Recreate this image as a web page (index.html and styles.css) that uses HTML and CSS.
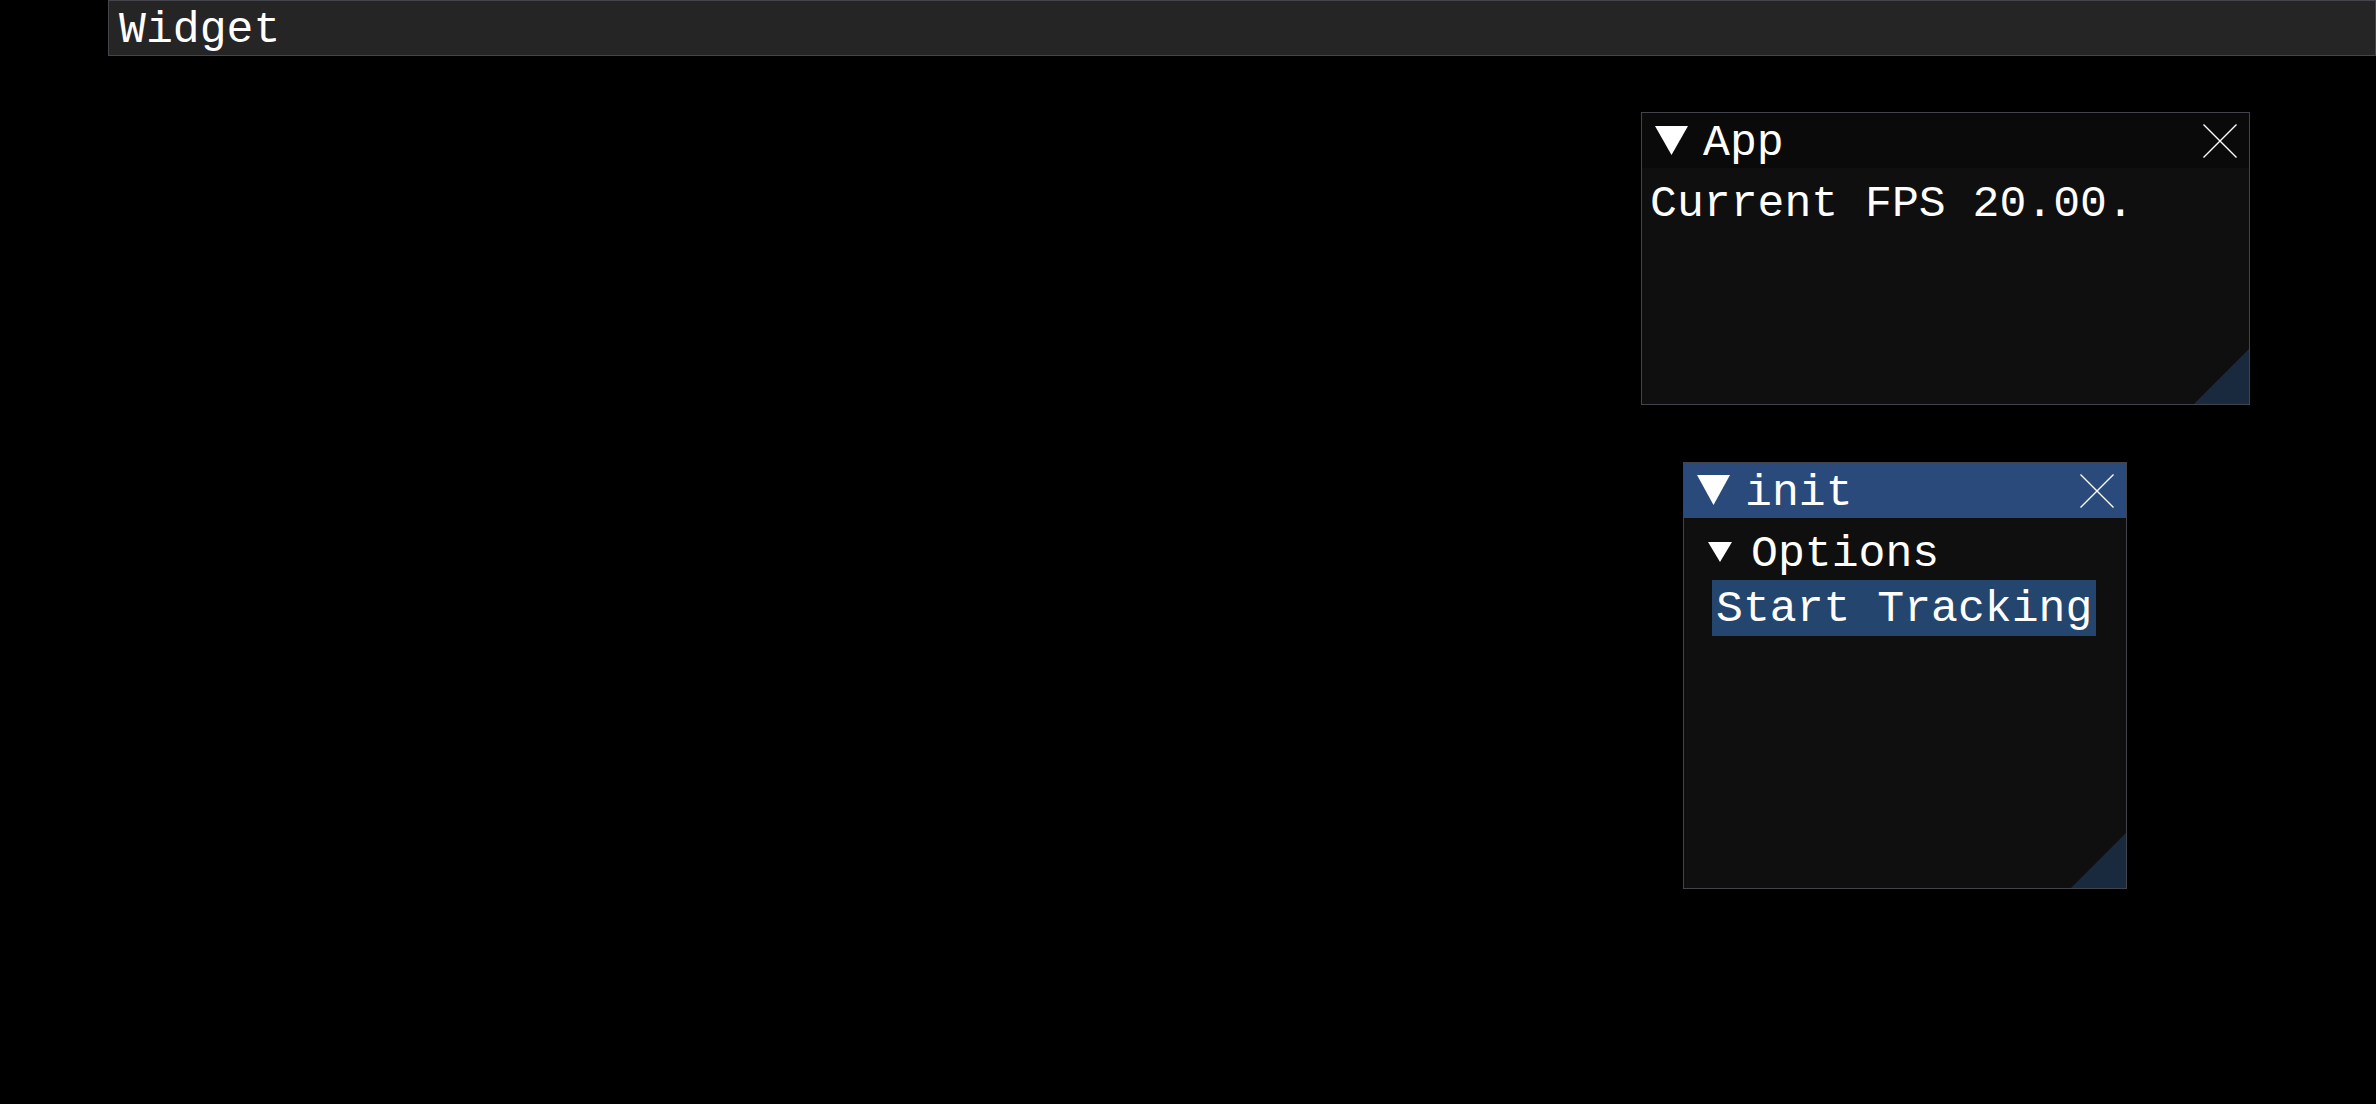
FILE: index.html
```html
<!DOCTYPE html>
<html>
<head>
<meta charset="utf-8">
<title>Widget</title>
<link rel="stylesheet" href="styles.css">
</head>
<body>
<div class="menubar">Widget</div>

<div class="win win-app">
  <div class="title title-inactive">
    <svg class="tri" width="33" height="29" viewBox="0 0 33 29"><polygon points="0,0 33,0 16.5,29" fill="#fff"/></svg>
    <span class="title-text">App</span>
    <svg class="close" width="34" height="34" viewBox="0 0 34 34"><path d="M0.5 0.5 L33.5 33.5 M33.5 0.5 L0.5 33.5" stroke="#fff" stroke-width="1.4" fill="none"/></svg>
  </div>
  <div class="body body-app">
    <div class="line">Current FPS 20.00.</div>
  </div>
  <svg class="grip" width="55" height="55" viewBox="0 0 55 55"><polygon points="55,0 55,55 0,55" fill="#1a2a3e"/></svg>
</div>

<div class="win win-init">
  <div class="title title-active">
    <svg class="tri" width="33" height="30" viewBox="0 0 33 30"><polygon points="0,0 33,0 16.5,30" fill="#fff"/></svg>
    <span class="title-text">init</span>
    <svg class="close" width="34" height="34" viewBox="0 0 34 34"><path d="M0.5 0.5 L33.5 33.5 M33.5 0.5 L0.5 33.5" stroke="#fff" stroke-width="1.4" fill="none"/></svg>
  </div>
  <div class="body body-init">
    <div class="tree">
      <svg class="tri-small" width="24" height="20" viewBox="0 0 24 20"><polygon points="0,0 24,0 12,20" fill="#fff"/></svg>
      <span>Options</span>
    </div>
    <div class="btn-row"><span class="btn">Start Tracking</span></div>
  </div>
  <svg class="grip" width="55" height="55" viewBox="0 0 55 55"><polygon points="55,0 55,55 0,55" fill="#1a2a3e"/></svg>
</div>
</body>
</html>
```
FILE: styles.css
```css
html, body {
  margin: 0;
  padding: 0;
  background: #000;
  width: 2376px;
  height: 1104px;
  overflow: hidden;
  font-family: "Liberation Mono", "DejaVu Sans Mono", monospace;
  font-size: 44.8px;
  color: #fff;
}

.menubar {
  margin-left: 108px;
  height: 56px;
  box-sizing: border-box;
  border: 1px solid #45454d;
  background: #252525;
  padding: 5px 0 0 10px;
  line-height: 49px;
  white-space: pre;
}

.win {
  position: absolute;
  box-sizing: border-box;
  border: 1px solid #43434c;
  background: #0f0f0f;
  display: flex;
  flex-direction: column;
}

.win-app {
  left: 1641px;
  top: 112px;
  width: 609px;
  height: 293px;
}

.win-init {
  left: 1683px;
  top: 462px;
  width: 444px;
  height: 427px;
}

.title {
  height: 55px;
  display: flex;
  align-items: center;
  padding: 0 12px 0 13px;
  flex: none;
}

.title-inactive { background: #0a0a0a; }
.title-active { background: #294a7a; }

.tri { flex: none; margin-top: -1px; }

.title-text {
  margin-left: 15px;
  flex: 1;
  line-height: 55px;
  padding-top: 5px;
  white-space: pre;
}

.close { flex: none; }

.body { flex: 1; }

.body-app {
  padding: 11px 0 0 8px;
}

.line {
  line-height: 50px;
  white-space: pre;
}

.body-init {
  padding: 6px 0 0 0;
}

.tree {
  height: 56px;
  display: flex;
  align-items: center;
  padding-left: 24px;
}

.tree span {
  margin-left: 19px;
  line-height: 54px;
  padding-top: 3px;
  white-space: pre;
}

.tri-small { flex: none; margin-top: -1px; }

.btn-row {
  padding-left: 28px;
  display: flex;
}

.btn {
  background: #24456e;
  height: 56px;
  box-sizing: border-box;
  padding: 3px 4px 0 4px;
  line-height: 53px;
  white-space: pre;
}

.grip {
  position: absolute;
  right: 0;
  bottom: 0;
}
```
